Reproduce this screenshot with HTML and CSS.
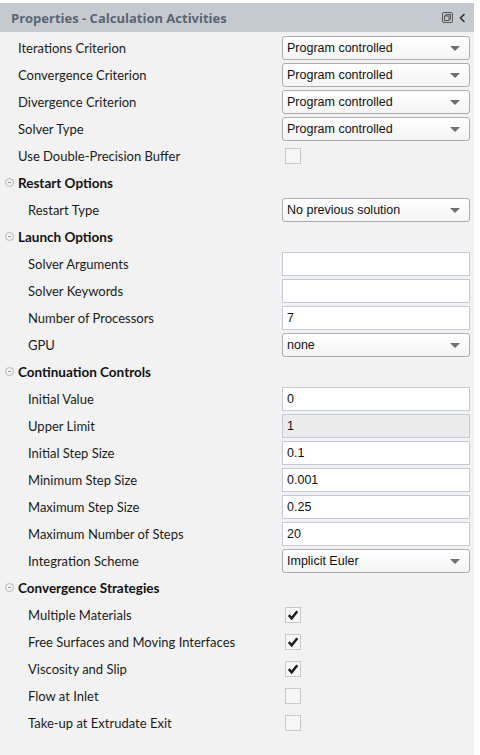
FILE: index.html
```html
<!DOCTYPE html>
<html>
<head>
<meta charset="utf-8">
<link rel="stylesheet" href="styles.css">
</head>
<body>
<div class="panel">
  <div class="titlebar">
    <span class="title">Properties - Calculation Activities</span>
    <span class="tools">
      <svg width="11" height="11" viewBox="0 0 11 11"><rect x="0.5" y="0.5" width="10" height="10" rx="1.5" fill="none" stroke="#555" stroke-width="1"/><rect x="4" y="2.5" width="4.5" height="4.5" fill="none" stroke="#555" stroke-width="1"/><rect x="2.5" y="4" width="4.5" height="4.5" fill="#c5cad1" stroke="#555" stroke-width="1"/></svg>
      <svg width="7" height="10" viewBox="0 0 7 10"><path d="M5.5 1 L1.5 5 L5.5 9" fill="none" stroke="#333" stroke-width="1.6"/></svg>
    </span>
  </div>
  <div class="rows">
    <div class="row"><span class="label l1">Iterations Criterion</span><div class="select">Program controlled<i class="arrow"></i></div></div>
    <div class="row"><span class="label l1">Convergence Criterion</span><div class="select">Program controlled<i class="arrow"></i></div></div>
    <div class="row"><span class="label l1">Divergence Criterion</span><div class="select">Program controlled<i class="arrow"></i></div></div>
    <div class="row"><span class="label l1">Solver Type</span><div class="select">Program controlled<i class="arrow"></i></div></div>
    <div class="row"><span class="label l1">Use Double-Precision Buffer</span><div class="checkcell"><span class="check"></span></div></div>

    <div class="row group"><span class="toggle"></span><span class="label gl">Restart Options</span></div>
    <div class="row"><span class="label l2">Restart Type</span><div class="select">No previous solution<i class="arrow"></i></div></div>

    <div class="row group"><span class="toggle"></span><span class="label gl">Launch Options</span></div>
    <div class="row"><span class="label l2">Solver Arguments</span><div class="input"></div></div>
    <div class="row"><span class="label l2">Solver Keywords</span><div class="input"></div></div>
    <div class="row"><span class="label l2">Number of Processors</span><div class="input">7</div></div>
    <div class="row"><span class="label l2">GPU</span><div class="select">none<i class="arrow"></i></div></div>

    <div class="row group"><span class="toggle"></span><span class="label gl">Continuation Controls</span></div>
    <div class="row"><span class="label l2">Initial Value</span><div class="input">0</div></div>
    <div class="row"><span class="label l2">Upper Limit</span><div class="input disabled">1</div></div>
    <div class="row"><span class="label l2">Initial Step Size</span><div class="input">0.1</div></div>
    <div class="row"><span class="label l2">Minimum Step Size</span><div class="input">0.001</div></div>
    <div class="row"><span class="label l2">Maximum Step Size</span><div class="input">0.25</div></div>
    <div class="row"><span class="label l2">Maximum Number of Steps</span><div class="input">20</div></div>
    <div class="row"><span class="label l2">Integration Scheme</span><div class="select">Implicit Euler<i class="arrow"></i></div></div>

    <div class="row group"><span class="toggle"></span><span class="label gl">Convergence Strategies</span></div>
    <div class="row"><span class="label l2">Multiple Materials</span><div class="checkcell"><span class="check"><svg class="tick" width="12" height="12" viewBox="0 0 12 12"><path d="M1.8 6.2 L4.7 9.3 L10.3 2.3" fill="none" stroke="#1e1e1e" stroke-width="2.5"/></svg></span></div></div>
    <div class="row"><span class="label l2">Free Surfaces and Moving Interfaces</span><div class="checkcell"><span class="check"><svg class="tick" width="12" height="12" viewBox="0 0 12 12"><path d="M1.8 6.2 L4.7 9.3 L10.3 2.3" fill="none" stroke="#1e1e1e" stroke-width="2.5"/></svg></span></div></div>
    <div class="row"><span class="label l2">Viscosity and Slip</span><div class="checkcell"><span class="check"><svg class="tick" width="12" height="12" viewBox="0 0 12 12"><path d="M1.8 6.2 L4.7 9.3 L10.3 2.3" fill="none" stroke="#1e1e1e" stroke-width="2.5"/></svg></span></div></div>
    <div class="row"><span class="label l2">Flow at Inlet</span><div class="checkcell"><span class="check"></span></div></div>
    <div class="row"><span class="label l2">Take-up at Extrudate Exit</span><div class="checkcell"><span class="check"></span></div></div>
  </div>
</div>
</body>
</html>
```

FILE: styles.css
```css
html, body {
  margin: 0;
  padding: 0;
  background: #ffffff;
}
body {
  padding-top: 3px;
  font-family: "Lato", "Open Sans", sans-serif;
}
.panel {
  width: 474px;
  height: 752px;
  background: #f2f2f2;
  overflow: hidden;
}
.titlebar {
  height: 29px;
  background: #c5cad1;
  display: flex;
  align-items: center;
  justify-content: space-between;
  padding: 0 8px 0 11px;
}
.title {
  font-family: "Open Sans", sans-serif;
  font-weight: 700;
  font-size: 13px;
  color: #5b6572;
}
.tools {
  display: flex;
  align-items: center;
  gap: 6px;
}
.rows {
  padding-top: 2px;
}
.row {
  height: 27px;
  display: flex;
  align-items: center;
  position: relative;
}
.label {
  font-size: 13px;
  color: #1b1b1b;
}
.l1 { padding-left: 18px; width: 264px; }
.l2 { padding-left: 28px; width: 254px; }
.gl { padding-left: 4px; font-weight: 700; font-size: 13.5px; color: #111; }
.group { padding-left: 5px; }
.toggle {
  width: 7px;
  height: 7px;
  border: 1px solid #b5b5b5;
  border-radius: 50%;
  position: relative;
  box-sizing: content-box;
}
.toggle::after {
  content: "";
  position: absolute;
  left: 2px;
  top: 3px;
  width: 3px;
  height: 1px;
  background: #9a9a9a;
}
.select, .input {
  width: 188px;
  height: 24px;
  box-sizing: border-box;
  font-family: "Liberation Sans", Arial, sans-serif;
  font-size: 12.5px;
  color: #111;
  display: flex;
  align-items: center;
  padding-left: 4px;
  position: relative;
}
.select {
  border: 1px solid #adadad;
  border-radius: 3px;
  background: linear-gradient(#ffffff, #f4f4f4);
}
.arrow {
  position: absolute;
  right: 9px;
  top: 9px;
  width: 0;
  height: 0;
  border-left: 5px solid transparent;
  border-right: 5px solid transparent;
  border-top: 5px solid #6e6e6e;
}
.input {
  border: 1px solid #c1cad6;
  background: #ffffff;
}
.input.disabled {
  background: #ebebeb;
}
.checkcell {
  width: 188px;
  padding-left: 3px;
}
.check {
  display: flex;
  width: 16px;
  height: 16px;
  box-sizing: border-box;
  border: 1px solid #c9c9c9;
  background: #f6f6f6;
  align-items: center;
  justify-content: center;
}
```
